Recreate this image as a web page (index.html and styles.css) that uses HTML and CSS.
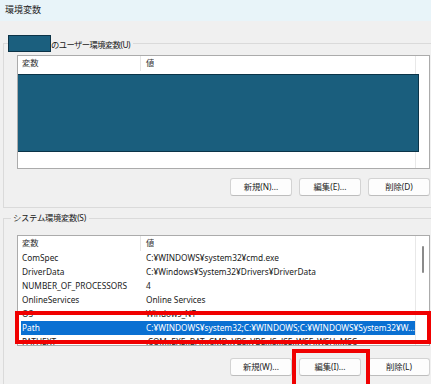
FILE: index.html
```html
<!DOCTYPE html>
<html lang="ja">
<head>
<meta charset="utf-8">
<title>環境変数</title>
<link rel="stylesheet" href="styles.css">
</head>
<body>
<div class="titlebar">環境変数</div>

<fieldset class="group group-user">
  <legend class="legend legend-user"><span class="redact-label"></span><span class="label-user">のユーザー環境変数(U)</span></legend>
  <div class="group-body body-user">
    <div class="list list-user">
      <div class="list-main">
        <div class="header"><div class="c1">変数</div><div class="c2">値</div></div>
      </div>
      <div class="vscroll"></div>
      <div class="redact-block"></div>
    </div>
    <div class="buttons buttons-user">
      <button class="btn">新規(N)...</button>
      <button class="btn">編集(E)...</button>
      <button class="btn">削除(D)</button>
    </div>
  </div>
</fieldset>

<fieldset class="group group-sys">
  <legend class="legend legend-sys"><span class="label-sys">システム環境変数(S)</span></legend>
  <div class="group-body body-sys">
    <div class="list list-sys">
      <div class="list-main">
        <div class="header"><div class="c1">変数</div><div class="c2">値</div></div>
        <div class="row"><div class="c1">ComSpec</div><div class="c2">C:¥WINDOWS¥system32¥cmd.exe</div></div>
        <div class="row"><div class="c1">DriverData</div><div class="c2">C:¥Windows¥System32¥Drivers¥DriverData</div></div>
        <div class="row"><div class="c1">NUMBER_OF_PROCESSORS</div><div class="c2">4</div></div>
        <div class="row"><div class="c1">OnlineServices</div><div class="c2">Online Services</div></div>
        <div class="row"><div class="c1">OS</div><div class="c2">Windows_NT</div></div>
        <div class="row sel"><div class="c1">Path</div><div class="c2">C:¥WINDOWS¥system32;C:¥WINDOWS;C:¥WINDOWS¥System32¥W...</div></div>
        <div class="row"><div class="c1">PATHEXT</div><div class="c2">.COM;.EXE;.BAT;.CMD;.VBS;.VBE;.JS;.JSE;.WSF;.WSH;.MSC</div></div>
      </div>
      <div class="vscroll vscroll-sys"><div class="thumb"></div></div>
    </div>
    <div class="buttons buttons-sys">
      <button class="btn">新規(W)...</button>
      <button class="btn">編集(I)...</button>
      <button class="btn">削除(L)</button>
    </div>
  </div>
</fieldset>

<div class="mark mark-row"></div>
<div class="mark mark-btn"></div>
</body>
</html>
```

FILE: styles.css
```css
* { box-sizing: border-box; }
html, body { margin: 0; padding: 0; }
body {
  width: 431px;
  height: 384px;
  overflow: hidden;
  position: relative;
  background: #f0f0f0;
  font-family: "Noto Sans", "Noto Sans CJK JP", sans-serif;
  font-size: 8.3px;
  color: #1a1a1a;
}
.titlebar {
  height: 21px;
  background: #e8f4f9;
  font-size: 9px;
  line-height: 20px;
  padding-left: 5px;
  color: #222;
}
.group {
  margin: 0;
  padding: 0;
  border: 1px solid #dadada;
  border-right: none;
  width: 428px;
  min-width: 0;
}
.group-user { margin: 14px 0 0 3px; }
.group-sys { margin: 3px 0 0 3px; height: 180px; }
.legend {
  padding: 0 3px 0 0;
  display: flex;
  align-items: center;
}
.legend-user { margin-left: 4px; height: 17px; }
.legend-sys { margin-left: 7px; padding: 0 3px 0 2px; height: 14px; line-height: 14px; }
.redact-label {
  width: 43px;
  height: 17px;
  background: #1b5f7e;
  border: 1px solid #0c3347;
}
.label-user { letter-spacing: -0.55px; }
.label-sys { letter-spacing: -0.25px; }
.body-user { padding: 3px 0 11px 13px; }
.body-sys { padding: 10px 0 0 13px; }
.list {
  width: 413px;
  border: 1px solid #ababab;
  background: #fff;
  display: flex;
  position: relative;
  overflow: hidden;
}
.list-user { height: 114px; }
.list-sys { height: 111px; }
.list-main {
  width: 398px;
  border-right: 1px solid #e8e8e8;
  flex: none;
}
.vscroll { flex: 1; }
.vscroll-sys { padding: 10px 0 0 6px; }
.thumb {
  width: 2px;
  height: 27px;
  background: #8a8a8a;
  border-radius: 1px;
}
.header {
  display: flex;
  height: 15px;
  line-height: 14px;
  color: #333;
}
.c1 {
  width: 123px;
  padding-left: 4px;
  flex: none;
  white-space: nowrap;
  overflow: hidden;
}
.header .c1 { border-right: 1px solid #e5e5e5; }
.c2 {
  padding-left: 5px;
  white-space: nowrap;
  overflow: hidden;
}
.row {
  display: flex;
  height: 14px;
  line-height: 14px;
}
.row.sel {
  margin-left: 3px;
  background: #0a70d2;
  color: #fff;
}
.row.sel .c1 { width: 120px; padding-left: 1px; }
.redact-block {
  position: absolute;
  left: -1px;
  top: 18px;
  width: 402px;
  height: 78px;
  background: #1a5e7d;
  border: 1px solid #0b3448;
}
.buttons {
  display: flex;
  justify-content: flex-end;
  gap: 7px;
  width: 413px;
}
.buttons-user { margin-top: 9px; }
.buttons-sys { margin-top: 12px; }
.btn {
  width: 62px;
  height: 18px;
  margin: 0;
  padding: 0;
  background: #fdfdfd;
  border: 1px solid #d3d3d3;
  border-bottom-color: #bdbdbd;
  border-radius: 3px;
  font: inherit;
  color: #1a1a1a;
  line-height: 16px;
  text-align: center;
}
.mark {
  position: absolute;
  border: 4px solid #f00000;
}
.mark-row { left: 15px; top: 311px; width: 416px; height: 33px; }
.mark-btn { left: 292px; top: 349px; width: 78px; height: 35px; border-bottom: none; }
```
